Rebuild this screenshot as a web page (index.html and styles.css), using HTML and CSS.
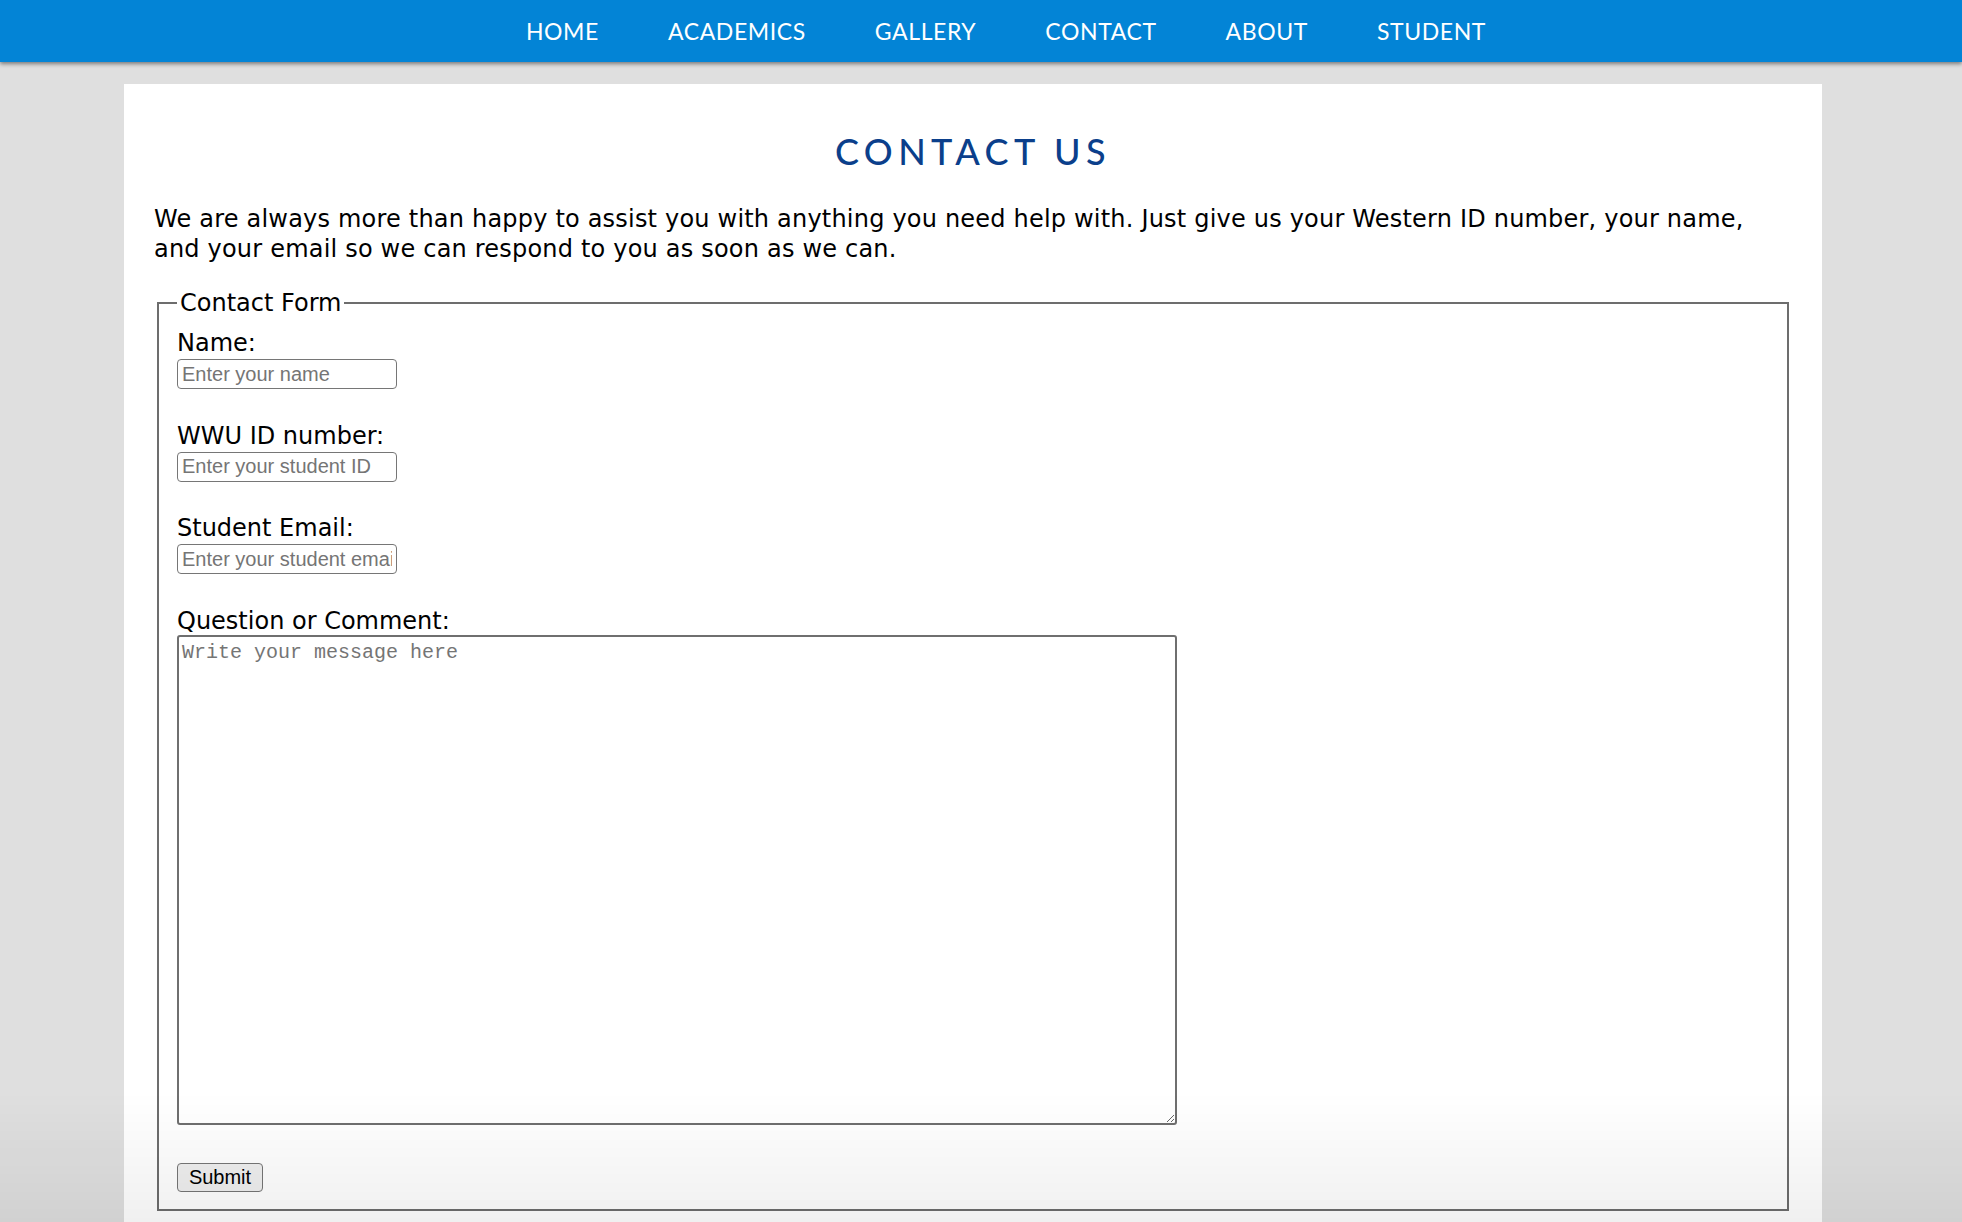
FILE: index.html
```html
<!DOCTYPE html>
<html lang="en">
<head>
<meta charset="utf-8">
<title>Contact Us</title>
<link rel="stylesheet" href="styles.css">
</head>
<body>
<nav class="topnav">
  <ul class="nav-list">
    <li><a href="#">HOME</a></li>
    <li><a href="#">ACADEMICS</a></li>
    <li><a href="#">GALLERY</a></li>
    <li><a href="#">CONTACT</a></li>
    <li><a href="#">ABOUT</a></li>
    <li><a href="#">STUDENT</a></li>
  </ul>
</nav>
<main class="page">
  <h1 class="title">CONTACT US</h1>
  <p class="intro">We are always more than happy to assist you with anything you need help with. Just give us your Western ID number, your name, and your email so we can respond to you as soon as we can.</p>
  <form class="contact-form">
    <fieldset class="form-box">
      <legend class="form-legend">Contact Form</legend>
      <div class="field">
        <label class="field-label" for="name">Name:</label>
        <input class="field-input" id="name" type="text" placeholder="Enter your name">
      </div>
      <div class="field">
        <label class="field-label" for="wid">WWU ID number:</label>
        <input class="field-input" id="wid" type="text" placeholder="Enter your student ID">
      </div>
      <div class="field">
        <label class="field-label" for="email">Student Email:</label>
        <input class="field-input" id="email" type="email" placeholder="Enter your student email">
      </div>
      <div class="field">
        <label class="field-label" for="msg">Question or Comment:</label>
        <textarea class="field-text" id="msg" placeholder="Write your message here"></textarea>
      </div>
      <button class="submit-btn" type="submit">Submit</button>
    </fieldset>
  </form>
</main>
<div class="bottom-fade"></div>
</body>
</html>
```
FILE: styles.css
```css
html, body {
  margin: 0;
  padding: 0;
}
body {
  background: #dfdfdf;
  font-family: "DejaVu Sans", Verdana, sans-serif;
  color: #000;
}
.topnav {
  height: 62px;
  background: #0384d6;
  box-shadow: 0 2px 4px rgba(0, 0, 0, 0.45);
  position: relative;
  z-index: 2;
}
.nav-list {
  list-style: none;
  margin: 0;
  padding: 0 0 0 50px;
  height: 62px;
  display: flex;
  justify-content: center;
  align-items: center;
  gap: 69px;
}
.nav-list a {
  color: #fff;
  text-decoration: none;
  font-family: Lato, "Open Sans", sans-serif;
  font-size: 23px;
  letter-spacing: 0.6px;
}
.page {
  margin: 22px 0 0 124px;
  width: 1698px;
  box-sizing: border-box;
  background: #fff;
  padding: 30px 30px 40px;
}
.title {
  margin: 17px 0 33px;
  text-align: center;
  font-family: Lato, "Open Sans", sans-serif;
  font-weight: 500;
  font-size: 36px;
  line-height: 40px;
  letter-spacing: 5.4px;
  color: #0b3f8b;
}
.intro {
  margin: 0;
  font-size: 24px;
  line-height: 30px;
  letter-spacing: 0.2px;
}
.contact-form {
  margin: 25px 0 0;
}
.form-box {
  margin: 0 3px;
  border: 2px solid #6d6d6d;
  padding: 12px 18px 17px;
  font-size: 24px;
}
.form-legend {
  padding: 0 3px;
  font-size: 24px;
  line-height: 28px;
}
.field {
  display: flex;
  flex-direction: column;
  align-items: flex-start;
  margin-bottom: 32.5px;
}
.field-label {
  font-size: 24px;
  line-height: 28px;
  margin-bottom: 2px;
}
.field-input {
  width: 220px;
  height: 30px;
  box-sizing: border-box;
  border: 1.5px solid #767676;
  border-radius: 4px;
  padding: 0 4px;
  font-family: "Liberation Sans", Arial, sans-serif;
  font-size: 20px;
  background: #fff;
}
.field-input::placeholder,
.field-text::placeholder {
  color: #757575;
}
.field-text {
  width: 1000px;
  height: 490px;
  box-sizing: border-box;
  border: 2px solid #6f6f6f;
  border-radius: 3px;
  padding: 4px 3px;
  font-family: "Liberation Mono", "Courier New", monospace;
  font-size: 20px;
  resize: both;
  margin: -2px 0 0;
}
.submit-btn {
  display: block;
  width: 86px;
  height: 29px;
  padding: 0;
  font-family: "Liberation Sans", Arial, sans-serif;
  font-size: 20px;
  line-height: 26px;
  color: #000;
  background: #efefef;
  border: 1.5px solid #767676;
  border-radius: 4px;
  margin-top: 38px;
}
.bottom-fade {
  position: fixed;
  left: 0;
  right: 0;
  bottom: 0;
  height: 130px;
  background: linear-gradient(to bottom, rgba(0, 0, 0, 0), rgba(0, 0, 0, 0.06));
  pointer-events: none;
}
```
